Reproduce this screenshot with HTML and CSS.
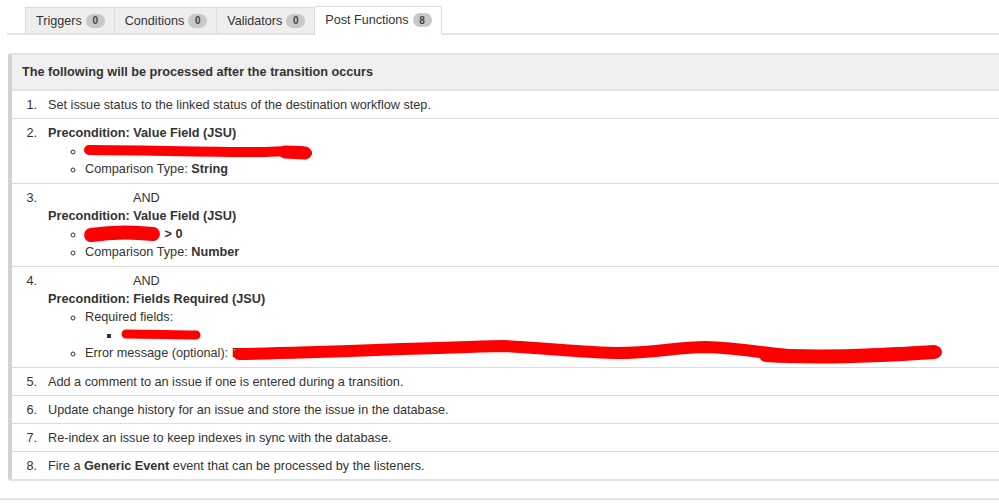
FILE: index.html
```html
<!DOCTYPE html>
<html lang="en">
<head>
<meta charset="utf-8">
<title>Post Functions</title>
<link rel="stylesheet" href="styles.css">
</head>
<body>
<div class="page">
  <div class="tabbar">
    <ul class="tabs">
      <li class="tab">Triggers <span class="badge">0</span></li>
      <li class="tab">Conditions <span class="badge">0</span></li>
      <li class="tab">Validators <span class="badge">0</span></li>
      <li class="tab active">Post Functions <span class="badge">8</span></li>
    </ul>
  </div>

  <div class="panel">
    <div class="panel-head">The following will be processed after the transition occurs</div>
    <ol class="steps">
      <li class="step"><div class="content">Set issue status to the linked status of the destination workflow step.</div></li>
      <li class="step multi"><div class="content">
        <div class="b">Precondition: Value Field (JSU)</div>
        <ul class="sub">
          <li><svg class="scribble" width="228" height="18" overflow="visible"><path d="M4 8 C 50 8, 120 10, 175 10 C 195 10, 205 8, 214 9 C 220 10, 222 11, 222 11" fill="none" stroke="#ff0000" stroke-width="10" stroke-linecap="round"/><path d="M200 10 L220 11" stroke="#ff0000" stroke-width="13" stroke-linecap="round"/></svg></li>
          <li>Comparison Type: <b>String</b></li>
        </ul>
      </div></li>
      <li class="step multi"><div class="content">
        <div class="and">AND</div>
        <div class="b">Precondition: Value Field (JSU)</div>
        <ul class="sub">
          <li><svg class="scribble" width="76" height="18" overflow="visible"><path d="M6 10 C 25 7, 50 7, 68 9" fill="none" stroke="#ff0000" stroke-width="14" stroke-linecap="round"/></svg><b> &gt; 0</b></li>
          <li>Comparison Type: <b>Number</b></li>
        </ul>
      </div></li>
      <li class="step multi"><div class="content">
        <div class="and">AND</div>
        <div class="b">Precondition: Fields Required (JSU)</div>
        <ul class="sub">
          <li>Required fields:
            <ul class="subsub">
              <li><svg class="scribble" width="80" height="18" overflow="visible"><path d="M5 8 C 30 8, 55 9, 75 9" fill="none" stroke="#ff0000" stroke-width="9" stroke-linecap="round"/></svg></li>
            </ul>
          </li>
          <li>Error message (optional): E<svg class="scribble wide" width="708" height="18" overflow="visible"><path d="M3 10 C 80 9, 180 4, 267 2 C 300 3, 330 8, 380 9 C 420 9, 440 3, 470 3 C 510 4, 540 12, 580 13 C 620 13, 640 9, 700 8" fill="none" stroke="#ff0000" stroke-width="12" stroke-linecap="round"/><path d="M530 11 C 580 14, 640 12, 698 8" fill="none" stroke="#ff0000" stroke-width="14" stroke-linecap="round"/></svg></li>
        </ul>
      </div></li>
      <li class="step"><div class="content">Add a comment to an issue if one is entered during a transition.</div></li>
      <li class="step"><div class="content">Update change history for an issue and store the issue in the database.</div></li>
      <li class="step"><div class="content">Re-index an issue to keep indexes in sync with the database.</div></li>
      <li class="step"><div class="content">Fire a <b>Generic Event</b> event that can be processed by the listeners.</div></li>
    </ol>
  </div>

  <div class="footer-line"></div>
</div>
</body>
</html>
```

FILE: styles.css
```css
html, body {
  margin: 0;
  padding: 0;
  overflow: hidden;
  background: #fff;
}

body {
  font-family: "Liberation Sans", Arial, sans-serif;
  font-size: 12.7px;
  color: #333;
}

.page {
  width: 999px;
}

/* Tabs */
.tabbar {
  display: flex;
  margin-left: 7px;
  padding-top: 6px;
  border-bottom: 2px solid #e4e4e4;
}

.tabs {
  display: flex;
  align-items: flex-end;
  list-style: none;
  margin: 0 0 -2px 18px;
  padding: 0;
}

.tab {
  display: flex;
  align-items: center;
  gap: 4px;
  height: 25px;
  padding: 0 9px 0 10px;
  background: #eeeeee;
  border: 1px solid #dcdcdc;
  border-bottom: 2px solid #e4e4e4;
  font-size: 12.6px;
  color: #333;
}

.tab + .tab {
  border-left: none;
}

.tab.active {
  height: 26px;
  background: #fff;
  border-bottom-color: #fff;
}

.badge {
  display: inline-flex;
  align-items: center;
  justify-content: center;
  min-width: 19px;
  height: 14px;
  padding: 0 1px;
  box-sizing: border-box;
  border-radius: 7px;
  background: #c8c8c8;
  color: #444;
  font-size: 10px;
  font-weight: bold;
}

/* Panel */
.panel {
  margin: 18px -6px 0 8px;
  border-top: 2px solid #e2e2e2;
  border-bottom: 2px solid #e2e2e2;
  border-left: 4px solid #d2d2d2;
  border-radius: 3px 0 0 3px;
}

.panel-head {
  height: 34px;
  line-height: 34px;
  padding-left: 10px;
  background: #f0f0f0;
  border-bottom: 2px solid #e2e2e2;
  font-weight: bold;
  color: #333;
}

.steps {
  list-style: none;
  margin: 0;
  padding: 0;
  counter-reset: step;
}

.step {
  display: grid;
  grid-template-columns: 25px 1fr;
  column-gap: 11px;
  padding: 5px 0 4px;
  line-height: 18px;
  border-bottom: 1px solid #dcdcdc;
  counter-increment: step;
}

.step.multi {
  padding-bottom: 5px;
}

.step:last-child {
  border-bottom: none;
}

.step::before {
  content: counter(step) ".";
  text-align: right;
}

.b {
  font-weight: bold;
}

.and {
  padding-left: 85px;
}

.sub {
  margin: 0;
  padding-left: 37px;
  list-style: circle;
}

.subsub {
  margin: 0;
  padding-left: 36px;
  list-style: square;
}

.scribble {
  vertical-align: top;
}

.scribble.wide {
  margin-left: -4px;
}

.footer-line {
  margin-top: 17px;
  height: 2px;
  background: #e4e4e4;
}
```
